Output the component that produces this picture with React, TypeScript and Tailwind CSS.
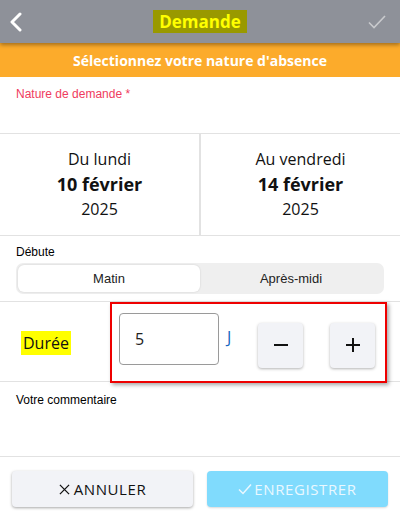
import { useState } from "react";

const open = "font-['Open_Sans',sans-serif]";
const arial = "font-['Liberation_Sans',Arial,sans-serif]";

export default function App() {
  const [debut, setDebut] = useState<"matin" | "aprem">("matin");
  const [duree, setDuree] = useState(5);

  return (
    <div className={`w-[400px] h-[522px] bg-white flex flex-col overflow-hidden ${open}`}>
      {/* HEADER */}
      <div className="relative z-10 h-[43px] bg-[#8e9199] flex items-center justify-between px-[8px] shadow-[0_2px_4px_rgba(0,0,0,0.35)]">
        <svg width="14" height="20" viewBox="0 0 14 20" className="ml-[1px]">
          <path d="M11 2 L3 10 L11 18" fill="none" stroke="#fff" strokeWidth="3" strokeLinecap="round" strokeLinejoin="round" />
        </svg>
        <div className="bg-[#999900] text-[#ffff00] font-bold text-[17px] leading-[23px] px-[6px] ml-[10px]">Demande</div>
        <svg width="20" height="16" viewBox="0 0 20 16" className="mr-[5px]">
          <path d="M2 8.5 L7 13.5 L18 2" fill="none" stroke="#c9cacd" strokeWidth="1.6" />
        </svg>
      </div>
      <div className="h-[34px] bg-[#fcab2b] flex items-center justify-center text-white font-bold text-[14px]">
        Sélectionnez votre nature d'absence
      </div>

      {/* NATURE */}
      <div className="h-[56px] px-[16px] pt-[8px]">
        <div className={`${arial} text-[12px] text-[#ef3b5e]`}>Nature de demande *</div>
      </div>

      {/* DATES */}
      <div className="h-[103px] flex border-t border-b border-[#e2e2e2]">
        <div className="flex-1 flex flex-col items-center justify-center text-[#111] pb-[2px]">
          <div className="text-[16px] leading-[24px]">Du lundi</div>
          <div className="text-[18px] font-bold leading-[26px]">10 février</div>
          <div className="text-[16px] leading-[24px]">2025</div>
        </div>
        <div className="w-[2px] bg-[#e2e2e2]" />
        <div className="flex-1 flex flex-col items-center justify-center text-[#111] pb-[2px]">
          <div className="text-[16px] leading-[24px]">Au vendredi</div>
          <div className="text-[18px] font-bold leading-[26px]">14 février</div>
          <div className="text-[16px] leading-[24px]">2025</div>
        </div>
      </div>

      {/* DEBUTE */}
      <div className="h-[66px] px-[16px] pt-[8px] border-b border-[#e2e2e2]">
        <div className={`${arial} text-[12px] text-black leading-[16px]`}>Débute</div>
        <div className={`${arial} mt-[3px] h-[31px] bg-[#efefef] rounded-[7px] p-[2px] flex text-[13px] text-[#222]`}>
          <button
            onClick={() => setDebut("matin")}
            className={`flex-1 rounded-[6px] ${debut === "matin" ? "bg-white shadow-[0_0_2px_rgba(0,0,0,0.15)]" : ""}`}
          >
            Matin
          </button>
          <button
            onClick={() => setDebut("aprem")}
            className={`flex-1 rounded-[6px] ${debut === "aprem" ? "bg-white shadow-[0_0_2px_rgba(0,0,0,0.15)]" : ""}`}
          >
            Après-midi
          </button>
        </div>
      </div>

      {/* DUREE */}
      <div className="h-[80px] flex items-center border-b border-[#e2e2e2]">
        <div className="w-[110px] pl-[21px] pt-[2px]">
          <span className="bg-[#ffff00] text-[#111] text-[16px] leading-[24px] px-[2px] inline-block">Durée</span>
        </div>
        <div className="h-[81px] w-[277px] border-2 border-[#ee0000] shadow-[2px_2px_4px_rgba(0,0,0,0.35)] flex items-center pl-[7px] mt-[1px]">
          <div className="w-[100px] h-[52px] border border-[#9a9a9a] rounded-[4px] flex items-center pl-[15px] text-[16px] text-[#222] -mt-[6px]">
            {duree}
          </div>
          <div className="ml-[8px] text-[16px] text-[#1565c0] -mt-[10px]">J</div>
          <button
            onClick={() => setDuree(Math.max(0, duree - 1))}
            className="ml-[27px] mt-[6px] w-[45px] h-[45px] rounded-[4px] bg-[#f2f3f7] shadow-[0_1px_3px_rgba(0,0,0,0.3)] flex items-center justify-center"
          >
            <svg width="16" height="16" viewBox="0 0 16 16"><path d="M1 8 H15" stroke="#111" strokeWidth="2" /></svg>
          </button>
          <button
            onClick={() => setDuree(duree + 1)}
            className="ml-[27px] mt-[6px] w-[45px] h-[45px] rounded-[4px] bg-[#f2f3f7] shadow-[0_1px_3px_rgba(0,0,0,0.3)] flex items-center justify-center"
          >
            <svg width="16" height="16" viewBox="0 0 16 16"><path d="M1 8 H15 M8 1 V15" stroke="#111" strokeWidth="2" /></svg>
          </button>
        </div>
      </div>

      {/* COMMENTAIRE */}
      <div className="h-[75px] px-[16px] pt-[9px] border-b border-[#e2e2e2]">
        <div className={`${arial} text-[12px] text-black`}>Votre commentaire</div>
      </div>

      {/* FOOTER */}
      <div className="flex-1 flex gap-[14px] px-[12px] pt-[14px]">
        <button className="flex-1 h-[36px] rounded-[4px] bg-[#f2f3f7] shadow-[0_1px_3px_rgba(0,0,0,0.35)] flex items-center justify-center gap-[4px] text-[15px] tracking-[0.04em] text-[#111]">
          <svg width="11" height="11" viewBox="0 0 12 12"><path d="M1 1 L11 11 M11 1 L1 11" stroke="#111" strokeWidth="1.4" /></svg>
          ANNULER
        </button>
        <button className="flex-1 h-[36px] rounded-[4px] bg-[#80dbfd] shadow-[0_1px_2px_rgba(0,0,0,0.15)] flex items-center justify-center gap-[2px] text-[15px] tracking-[0.04em] text-[#eaf8ff]">
          <svg width="14" height="12" viewBox="0 0 14 12"><path d="M1 6.5 L5 10.5 L13 1.5" fill="none" stroke="#eaf8ff" strokeWidth="1.5" /></svg>
          ENREGISTRER
        </button>
      </div>
    </div>
  );
}
